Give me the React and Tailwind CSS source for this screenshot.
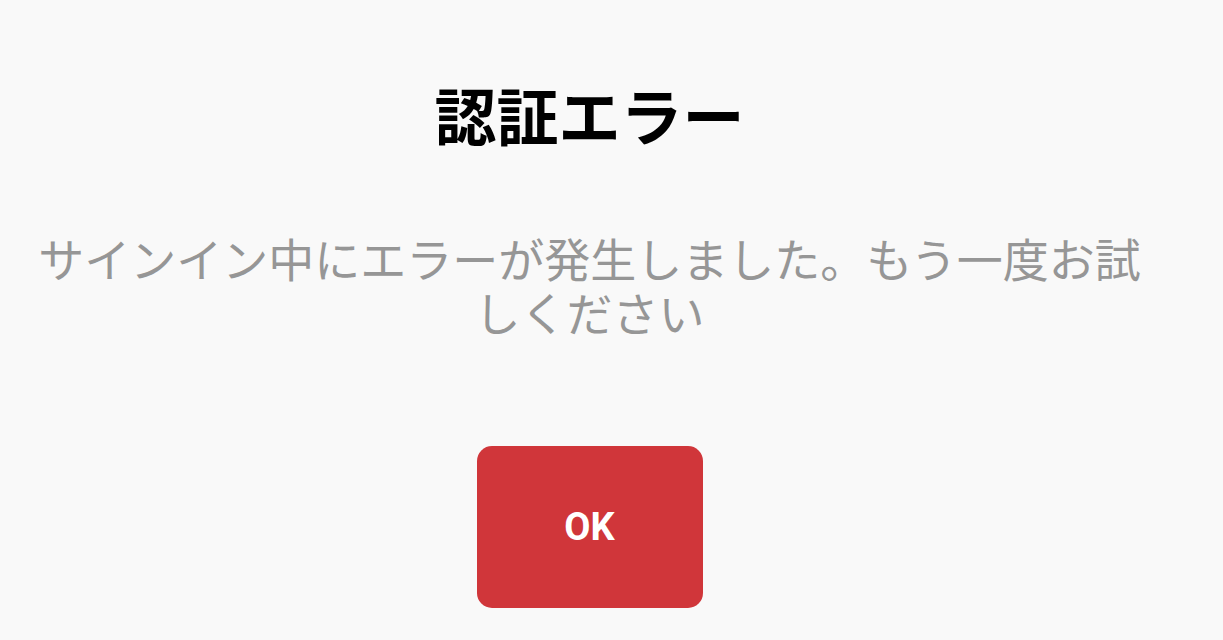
import React from 'react';

const App = () => {
  return (
    <div className="w-full h-[640px] bg-[#f9f9f9] overflow-hidden">
      <div className="w-[1179px] flex flex-col items-center pt-[78px]">
        {/* タイトル */}
        <h1 className="text-[62px] leading-[72px] font-bold text-black [font-family:'Noto_Sans_CJK_JP',sans-serif]">
          認証エラー
        </h1>

        {/* メッセージ */}
        <p className="mt-[80px] w-[1120px] text-center text-[46px] leading-[54px] text-[#969696] [font-family:'Noto_Sans_CJK_JP',sans-serif]">
          サインイン中にエラーが発生しました。もう一度お試しください
        </p>

        {/* ボタン */}
        <button className="mt-[108px] w-[226px] h-[162px] rounded-[15px] bg-[#d0363a] text-white text-[38px] font-bold [font-family:Roboto,sans-serif]">
          OK
        </button>
      </div>
    </div>
  );
};

export default App;
